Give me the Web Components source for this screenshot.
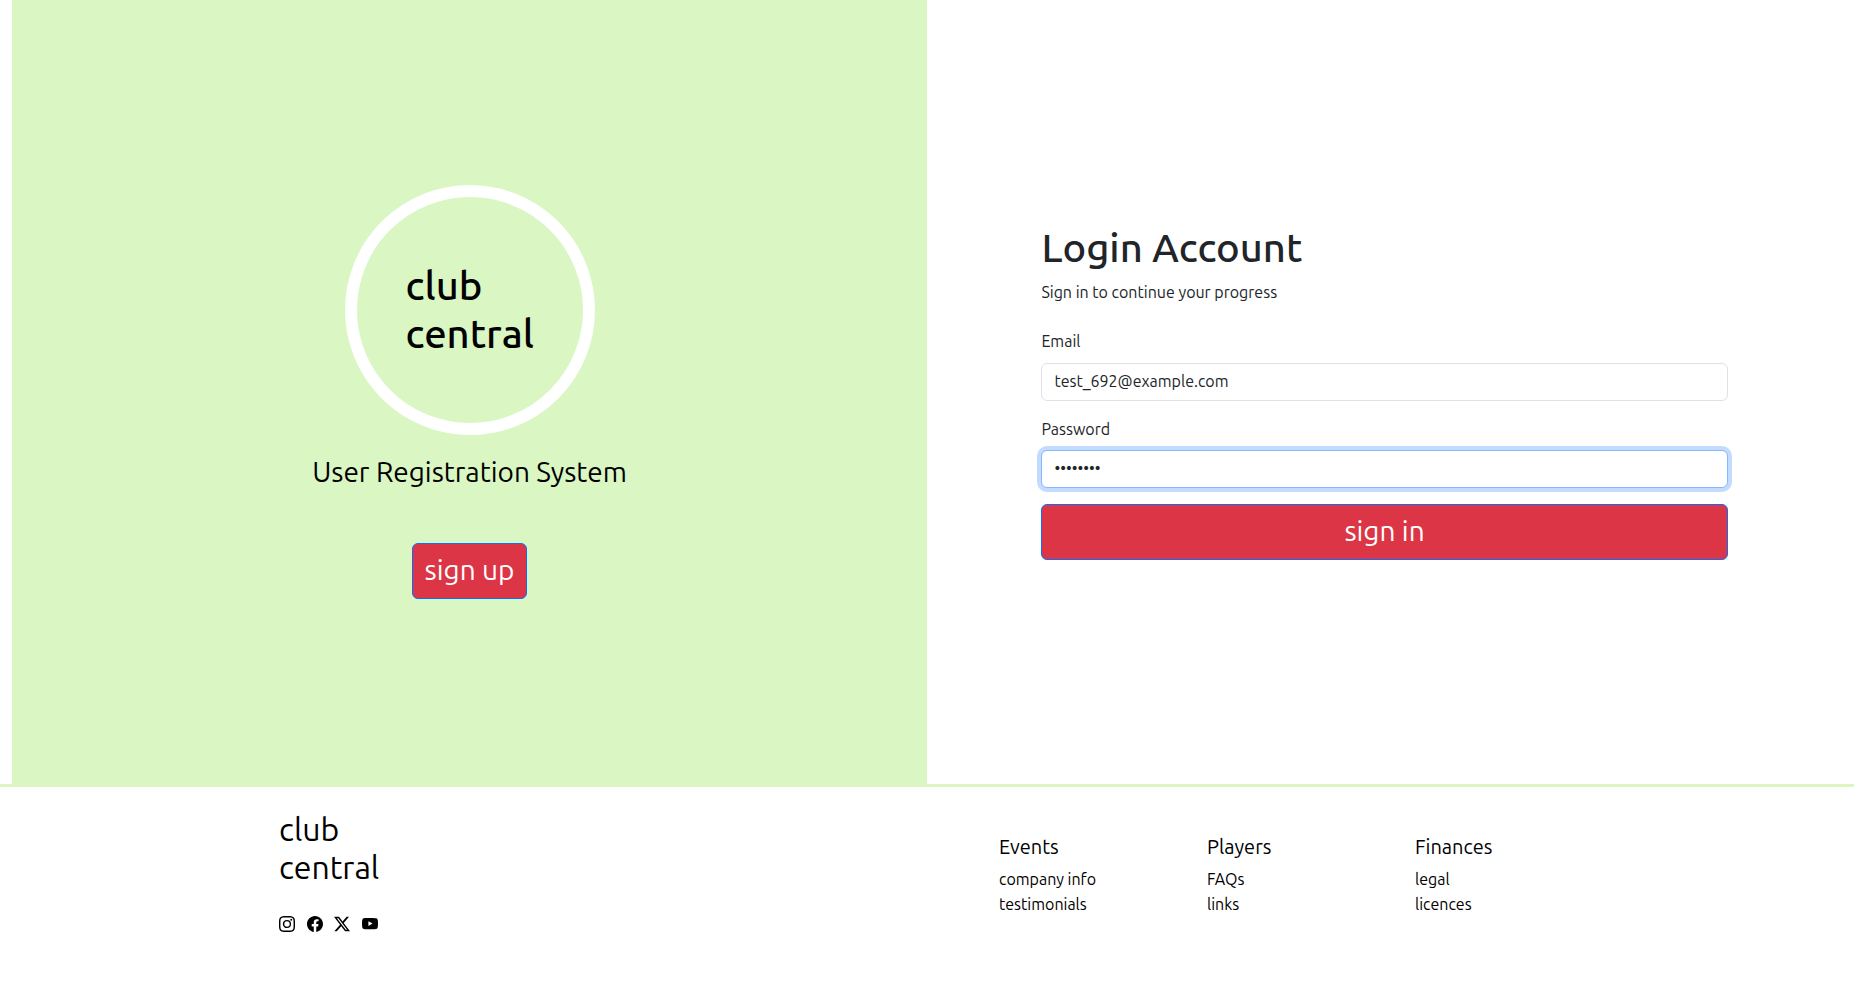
<!DOCTYPE html>
<html lang="en">
<head>
<meta charset="utf-8">
<title>Club Central</title>
<style>
html,body{margin:0;height:100%;background:#fff}
body{font-family:Ubuntu,"Noto Sans",sans-serif;font-size:16px;line-height:24px;color:#212529;overflow:hidden}
</style>
</head>
<body>
<club-page></club-page>
<script>
const define = (name, html) => customElements.define(name, class extends HTMLElement {
  constructor() { super(); this.attachShadow({mode: 'open'}).innerHTML = html; }
});

define('text-line', '<style>:host{display:block;white-space:nowrap}</style><slot></slot>');

define('action-button', `<style>
:host{display:flex;justify-content:center;box-sizing:border-box;height:56px;padding:5px 12px 7px;border:1px solid #0d6efd;border-radius:6px;background:#dc3545;color:#fff;font-size:28px;line-height:42px}
</style><slot></slot>`);

define('text-field', `<style>
:host{display:block}
.box{box-sizing:border-box;height:38px;border:1px solid #dee2e6;border-radius:6px;padding:5px 12px 7px;background:#fff}
:host([focused]) .box{border-color:#86b7fe;box-shadow:0 0 0 4px #c2dbfe}
.label{margin-bottom:var(--label-gap,8px)}
</style><div class="label"><slot name="label"></slot></div><div class="box"><slot></slot></div>`);

define('welcome-panel', `<style>
:host{display:flex;flex-direction:column;align-items:center;box-sizing:border-box;width:915px;margin-left:12px;padding-top:185px;background:#d9f6c3;color:#000}
.ring{box-sizing:border-box;width:250px;height:250px;border:12px solid #fff;border-radius:50%;display:flex;flex-direction:column;padding:65px 0 0 49px;font-size:40px;line-height:48px;font-weight:500}
.sub{margin:16px 0 50px;font-size:28px;line-height:42px}
action-button{width:115px}
</style>
<div class="ring"><text-line>club</text-line><text-line>central</text-line></div>
<div class="sub"><text-line>User Registration System</text-line></div>
<action-button><text-line>sign up</text-line></action-button>`);

define('login-form', `<style>
:host{display:block;box-sizing:border-box;width:686.25px;margin:224px 0 0 114.375px}
.title{font-size:40px;line-height:48px;font-weight:500;margin-bottom:8px}
.lead{margin-bottom:25px}
text-field{margin-bottom:16px}
.email{--label-gap:10px}
.password{--label-gap:9px}
</style>
<div class="title"><text-line>Login Account</text-line></div>
<div class="lead"><text-line>Sign in to continue your progress</text-line></div>
<text-field class="email"><text-line slot="label">Email</text-line><text-line>test_692@example.com</text-line></text-field>
<text-field class="password" focused><text-line slot="label">Password</text-line><text-line>••••••••</text-line></text-field>
<action-button><text-line>sign in</text-line></action-button>`);

define('social-links', `<style>
:host{display:flex;gap:11.7px;color:#000}
svg{display:block;width:16px;height:16px;fill:currentColor}
</style>
<svg viewBox="0 0 16 16"><path d="M8 0C5.829 0 5.556.01 4.703.048 3.85.088 3.269.222 2.76.42a3.9 3.9 0 0 0-1.417.923A3.9 3.9 0 0 0 .42 2.76C.222 3.268.087 3.85.048 4.7.01 5.555 0 5.827 0 8.001c0 2.172.01 2.444.048 3.297.04.852.174 1.433.372 1.942.205.526.478.972.923 1.417.444.445.89.719 1.416.923.51.198 1.09.333 1.942.372C5.555 15.99 5.827 16 8 16s2.444-.01 3.298-.048c.851-.04 1.434-.174 1.943-.372a3.9 3.9 0 0 0 1.416-.923c.445-.445.718-.891.923-1.417.197-.509.332-1.09.372-1.942C15.99 10.445 16 10.173 16 8s-.01-2.445-.048-3.299c-.04-.851-.175-1.433-.372-1.941a3.9 3.9 0 0 0-.923-1.417A3.9 3.9 0 0 0 13.24.42c-.51-.198-1.092-.333-1.943-.372C10.443.01 10.172 0 7.998 0zm-.717 1.442h.718c2.136 0 2.389.007 3.232.046.78.035 1.204.166 1.486.275.373.145.64.319.92.599s.453.546.598.92c.11.281.24.705.275 1.485.039.843.047 1.096.047 3.231s-.008 2.389-.047 3.232c-.035.78-.166 1.203-.275 1.485a2.5 2.5 0 0 1-.599.919c-.28.28-.546.453-.92.598-.28.11-.704.24-1.485.276-.843.038-1.096.047-3.232.047s-2.39-.009-3.233-.047c-.78-.036-1.203-.166-1.485-.276a2.5 2.5 0 0 1-.92-.598 2.5 2.5 0 0 1-.6-.92c-.109-.281-.24-.705-.275-1.485-.038-.843-.046-1.096-.046-3.233s.008-2.388.046-3.231c.036-.78.166-1.204.276-1.486.145-.373.319-.64.599-.92s.546-.453.92-.598c.282-.11.705-.24 1.485-.276.738-.034 1.024-.044 2.515-.045zm4.988 1.328a.96.96 0 1 0 0 1.92.96.96 0 0 0 0-1.92m-4.27 1.122a4.109 4.109 0 1 0 0 8.217 4.109 4.109 0 0 0 0-8.217m0 1.441a2.667 2.667 0 1 1 0 5.334 2.667 2.667 0 0 1 0-5.334"/></svg>
<svg viewBox="0 0 16 16"><path d="M16 8.049c0-4.446-3.582-8.05-8-8.05C3.58 0-.002 3.603-.002 8.05c0 4.017 2.926 7.347 6.75 7.951v-5.625h-2.03V8.05H6.75V6.275c0-2.017 1.195-3.131 3.022-3.131.876 0 1.791.157 1.791.157v1.98h-1.009c-.993 0-1.303.621-1.303 1.258v1.51h2.218l-.354 2.326H9.25V16c3.824-.604 6.75-3.934 6.75-7.951"/></svg>
<svg viewBox="0 0 16 16"><path d="M12.6.75h2.454l-5.36 6.142L16 15.25h-4.937l-3.867-5.07-4.425 5.07H.316l5.733-6.57L0 .75h5.063l3.495 4.633L12.601.75Zm-.86 13.028h1.36L4.323 2.145H2.865z"/></svg>
<svg viewBox="0 0 16 16"><path d="M8.051 1.999h.089c.822.003 4.987.033 6.11.335a2.01 2.01 0 0 1 1.415 1.42c.101.38.172.883.22 1.402l.01.104.022.26.008.104c.065.914.073 1.77.074 1.957v.075c-.001.194-.01 1.108-.082 2.06l-.008.105-.009.104c-.05.572-.124 1.14-.235 1.558a2.01 2.01 0 0 1-1.415 1.42c-1.16.312-5.569.334-6.18.335h-.142c-.309 0-1.587-.006-2.927-.052l-.17-.006-.087-.004-.171-.007-.171-.007c-1.11-.049-2.167-.128-2.654-.26a2.01 2.01 0 0 1-1.415-1.419c-.111-.417-.185-.986-.235-1.558L.09 9.82l-.008-.104A31 31 0 0 1 0 7.68v-.123c.002-.215.01-.958.064-1.778l.007-.103.003-.052.008-.104.022-.26.01-.104c.048-.519.119-1.023.22-1.402a2.01 2.01 0 0 1 1.415-1.42c.487-.13 1.544-.21 2.654-.26l.17-.007.172-.006.086-.003.171-.007A100 100 0 0 1 7.858 2zM6.4 5.209v4.818l4.157-2.408z"/></svg>`);

define('link-column', `<style>
:host{display:block;width:208px;line-height:25px}
.head{font-size:20px;line-height:24px;margin-bottom:8px}
</style><div class="head"><slot name="head"></slot></div><slot></slot>`);

define('page-footer', `<style>
:host{display:flex;height:197px;border-top:3px solid #d9f6c3;color:#000}
.brand{width:720px;padding:23px 0 0 279px}
.logo{font-size:32px;line-height:38.4px;margin-bottom:29px}
.cols{display:flex;padding-top:48px}
</style>
<div class="brand"><div class="logo"><text-line>club</text-line><text-line>central</text-line></div><social-links></social-links></div>
<div class="cols">
<link-column><text-line slot="head">Events</text-line><text-line>company info</text-line><text-line>testimonials</text-line></link-column>
<link-column><text-line slot="head">Players</text-line><text-line>FAQs</text-line><text-line>links</text-line></link-column>
<link-column><text-line slot="head">Finances</text-line><text-line>legal</text-line><text-line>licences</text-line></link-column>
</div>`);

define('club-page', `<style>
:host{display:flex;flex-direction:column;height:984px}
main{display:flex;height:784px}
</style><main><welcome-panel></welcome-panel><login-form></login-form></main><page-footer></page-footer>`);
</script>
</body>
</html>
